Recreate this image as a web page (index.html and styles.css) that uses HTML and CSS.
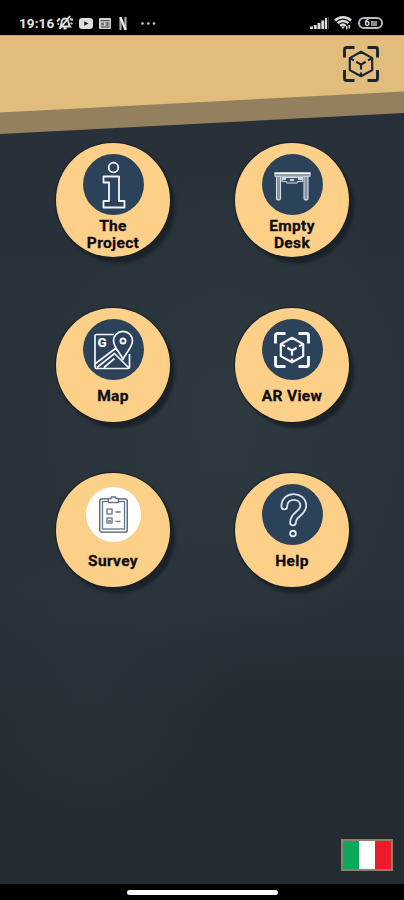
FILE: index.html
```html
<!DOCTYPE html>
<html lang="en">
<head>
<meta charset="utf-8">
<title>Menu</title>
<link rel="stylesheet" href="styles.css">
</head>
<body>
<svg class="defs" aria-hidden="true">
  <symbol id="ar" viewBox="0 0 36 36">
    <g fill="none" stroke="currentColor" stroke-linejoin="round">
      <path class="corner" d="M1.500 11.500v-8a2 2 0 0 1 2-2h8M24.500 1.500h8a2 2 0 0 1 2 2v8M34.500 24v8.500a2 2 0 0 1-2 2h-8M11.500 34.500h-8a2 2 0 0 1-2-2V24"/>
      <path class="cube" d="M18 5.800l11.200 6.300v12L18 30.200 6.800 24.100v-12zM6.800 12.100l4.200 2.300M29.200 12.100L25 14.400M13.300 15.800L18 18.600l4.700-2.800M18 18.600v4.800M18 26.500v3.500"/>
    </g>
  </symbol>
</svg>
<div class="phone">
  <div class="status">
    <span class="time">19:16</span>
    <svg class="bell" width="18" height="16" viewBox="0 0 18 16"><path d="M4.500 11.500c1.200-1.500.5-4.500 1.800-6.500 1.200-2 4.200-2 5.500 0 1.200 2 .6 5 2 6.500zM7.500 13.500h3M14 1L3.500 14M1 6.500l3-3M1.500 9.500l1.500-1M14 4l3 1M14.500 8l2 1" fill="none" stroke="#ddd" stroke-width="1.900"/></svg>
    <svg class="tube" width="14" height="11" viewBox="0 0 14 11"><rect width="14" height="11" rx="3" fill="#ddd"/><path d="M5.300 3.200v4.600l4-2.300z" fill="#111"/></svg>
    <svg class="news" width="12" height="11" viewBox="0 0 12 11"><rect width="12" height="11" rx="1" fill="#d2d2d2"/><path d="M1.500 2.700h9M6.500 5h4M6.500 7h4M2 9h8.500" stroke="#333"/><path d="M2 4.500h3v3H2z" fill="#777"/></svg>
    <svg class="net" width="8" height="13" viewBox="0 0 8 13"><path d="M1.500 0v13M6.500 0v13" stroke="#aaa" stroke-width="2.200"/><path d="M1.400 0l5.200 13" stroke="#eee" stroke-width="2.200"/></svg>
    <svg class="dots" width="15" height="3" viewBox="0 0 15 3"><g fill="#ccc"><circle cx="1.500" cy="1.500" r="1.300"/><circle cx="7.300" cy="1.500" r="1.300"/><circle cx="13" cy="1.500" r="1.300"/></g></svg>
    <span class="spacer"></span>
    <svg class="signal" width="20" height="12" viewBox="0 0 20 12"><path d="M1.500 12V9.500M5.300 12V8M9 12V6M12.800 12V3.500" stroke="#ddd" stroke-width="2.900"/><path d="M16 12V1" stroke="#ddd" stroke-width="2"/><path d="M18.300 12V0" stroke="#444" stroke-width="1.500"/></svg>
    <svg class="wifi" width="18" height="14" viewBox="0 0 18 14"><g fill="none" stroke="#ddd" stroke-width="2.500"><path d="M1 4.500c4.500-4.300 11.500-4.300 16 0M3.500 7.200c3-3 8-3 11 0M6.200 9.800c1.700-1.500 4-1.500 5.600 0"/></g><path d="M7 10.500L9 13l2-2.500zM12 10h1.500v3.500H12zM14.500 9H16v3.500h-1.500z" fill="#ddd"/></svg>
    <span class="battery">6<i></i></span>
  </div>
  <div class="screen">
    <svg class="banner" width="404" height="99" viewBox="0 0 404 99"><path d="M0 0h404v78L0 99z" fill="#92805e"/><path d="M0 0h404v56.500L0 77.500z" fill="#e1bc7d"/><path d="M0 0h404v1H0z" fill="#c7a365"/></svg>
    <svg class="scan" width="36" height="36"><use href="#ar"/></svg>
    <main class="grid">
      <a class="tile"><span class="badge"><svg width="61" height="61" viewBox="0 0 61 61"><g fill="none" stroke="#f1f5fa" stroke-width="1.800" stroke-linejoin="round"><circle cx="30.500" cy="13.500" r="4.800"/><path d="M20.500 22.500h15.500v24.500H41.500v6.500H20.500V47H26V28.500h-5.500z"/></g></svg></span><span class="label">The<br>Project</span></a>
      <a class="tile"><span class="badge"><svg width="61" height="61" viewBox="0 0 61 61"><g fill="#8493a6" stroke="#d5dde6" stroke-width="1.100" stroke-linejoin="round"><path d="M14.500 22v23q2 2 4 0V22zM42 22v23q2 2 4 0V22z"/><path d="M20 23.500h20.500v4H36l-1 1.500H25l-1-1.500h-4z" fill="#3d526a"/><path d="M13 19h35v3.200h-35z"/></g><path d="M12.500 19.200h36" stroke="#fff" stroke-width="1.600"/><path d="M28 26h4M20 25h4M36 25h4" stroke="#fff" stroke-width="1.400"/></svg></span><span class="label">Empty<br>Desk</span></a>
      <a class="tile single"><span class="badge"><svg width="61" height="61" viewBox="0 0 61 61"><g fill="none" stroke="#f2f6fb" stroke-width="1.700" stroke-linejoin="round"><path d="M31 15.500H13.500a1.500 1.500 0 0 0-1.500 1.500v31a1.500 1.500 0 0 0 1.500 1.500h31.500a1.500 1.500 0 0 0 1.500-1.500V35M12.500 44.500L32.500 29.500 37 34M14 48.500L31.500 34.500 45.500 48.500M21 48.500L31.500 39.500"/><path d="M40 40.500C37.500 34 30.500 28.500 30.500 21.800a9.500 9.500 0 0 1 19 0C49.500 28.500 42.500 34 40 40.500z" fill="#2c4259"/><circle cx="40" cy="22" r="2.500" stroke-width="2"/></g><text x="14.500" y="28" class="glyph">G</text></svg></span><span class="label">Map</span></a>
      <a class="tile single"><span class="badge ar-badge"><svg width="36" height="36"><use href="#ar"/></svg></span><span class="label">AR View</span></a>
      <a class="tile single"><span class="badge white"><svg width="29" height="37" viewBox="0 0 29 37"><g fill="none" stroke="#65758a" stroke-width="1.300"><rect x=".8" y="2.800" width="27.400" height="33.400" rx="2" stroke="#45566d"/><rect x="3.500" y="5.500" width="22" height="27.500"/><path d="M9.500 6.500V2.500H12l.5-1.500h4l.5 1.500h2.500v4z" fill="#fff"/><rect x="8" y="13" width="5" height="5"/><rect x="8" y="22" width="5" height="5"/><path d="M16.500 16h5M16.500 25.300h5M9 25h3"/></g></svg></span><span class="label">Survey</span></a>
      <a class="tile single"><span class="badge"><svg width="61" height="61" viewBox="0 0 61 61"><path d="M22.300 22.500C22.300 9.500 41.300 10.500 41.300 21.500 41.300 30 31 29.500 31 38.500" fill="none" stroke="#dce4ed" stroke-width="7.600" stroke-linecap="round"/><path d="M22.300 22.500C22.300 9.500 41.300 10.500 41.300 21.500 41.300 30 31 29.500 31 38.500" fill="none" stroke="#2c4259" stroke-width="4" stroke-linecap="round"/><circle cx="31" cy="49.500" r="2.800" fill="none" stroke="#e5ecf4" stroke-width="1.900"/></svg></span><span class="label">Help</span></a>
    </main>
    <div class="flag"><i class="green"></i><i class="cream"></i><i class="red"></i></div>
  </div>
  <div class="nav"><span></span></div>
</div>
</body>
</html>
```
FILE: styles.css
```css
* { box-sizing: border-box; }
body { margin: 0; background: #000; font-family: Roboto, "Liberation Sans", sans-serif; }
svg { display: block; flex: none; }
.defs { position: absolute; width: 0; height: 0; }
.phone { width: 404px; height: 900px; display: flex; flex-direction: column; overflow: hidden; }

.status { height: 35px; padding: 11px 21px 0 19px; display: flex; align-items: center; color: #e4e4e4; background: #000; flex: none; }
.time { width: 37px; font-size: 13.500px; font-weight: 700; letter-spacing: .1px; white-space: nowrap; }
.tube { margin-left: 5px; }
.news { margin-left: 6px; }
.net { margin-left: 8px; }
.dots { margin-left: 14px; }
.spacer { flex: 1; }
.signal { margin-right: 4px; }
.wifi { margin-right: 6px; }
.battery { width: 25px; height: 12px; border: 2px solid #bbb; border-radius: 6px; display: flex; align-items: center; justify-content: center; gap: 1px; font-size: 9px; font-weight: 700; line-height: 7px; }
.battery i { width: 6px; height: 5px; background: #888; }

.screen {
  height: 849px; flex: none; position: relative; display: flex; flex-direction: column;
  background:
    radial-gradient(ellipse 190px 260px at 225px 380px, rgba(52, 66, 72, .45), transparent),
    radial-gradient(ellipse 150px 160px at 90px 660px, rgba(49, 58, 66, .4), transparent),
    linear-gradient(#273039 0, #293239 35%, #29323a 65%, #242c31 80%, #242b31 100%);
}
.banner { height: 99px; }
.scan { position: absolute; right: 25px; top: 11px; color: #182631; }
.corner { stroke-width: 2.900px; }
.cube { stroke-width: 2.200px; }

.grid { display: grid; grid-template-columns: 114px 114px; grid-auto-rows: 114px; column-gap: 65px; row-gap: 51px; padding: 9px 0 0 56px; }
.tile { border-radius: 50%; background: #fdd08a; display: flex; flex-direction: column; align-items: center; padding-top: 11px; box-shadow: 0 0 1px 1px #171e26, 5px 6px 3px 0 #1b2228; color: #0b0d10; }
.badge { width: 61px; height: 61px; border-radius: 50%; background: #2c4259; display: flex; align-items: center; justify-content: center; flex: none; }
.ar-badge { color: #f4f7fb; }
.white { width: 55px; height: 55px; margin: 3px 0; background: #fff; }
.label { margin-top: 3px; font-size: 15.500px; font-weight: 700; line-height: 16.500px; letter-spacing: .35px; text-align: center; white-space: nowrap; -webkit-text-stroke: .3px #0b0d10; }
.single .label { margin-top: 8px; }
.glyph { font-size: 13.500px; font-weight: 900; fill: #f2f6fb; }

.flag { margin: auto 11px 13px auto; width: 52px; height: 32px; border: 2px solid #8f806c; display: flex; }
.flag i { flex: 1; }
.green { background: #0ba75b; }
.cream { background: #fff; }
.red { background: #ed1c2b; }

.nav { height: 16px; display: flex; justify-content: center; padding-top: 6px; background: #000; flex: none; }
.nav span { width: 151px; height: 5px; border-radius: 3px; background: #fff; }
```
